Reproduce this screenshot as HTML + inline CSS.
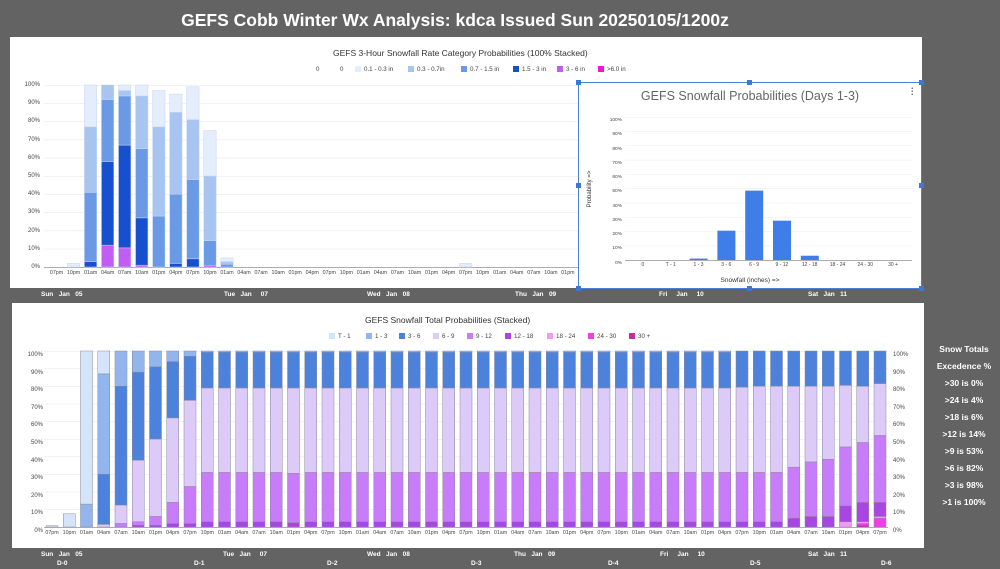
<!DOCTYPE html>
<html><head><meta charset="utf-8">
<style>
*{margin:0;padding:0;box-sizing:border-box}
body{width:1000px;height:569px;background:#636363;position:relative;overflow:hidden;font-family:"Liberation Sans",sans-serif}
.abs{position:absolute}
.title{left:0;width:910px;top:10px;text-align:center;color:#fff;font-weight:bold;font-size:17.5px}
.panel{background:#fff}
.ticks{display:flex;position:absolute;font-size:5.3px;color:#444;white-space:nowrap}
.ticks span{display:block;text-align:center;flex:none}
.day{color:#fff;font-weight:bold;font-size:6.5px;white-space:nowrap}
.yl{font-size:6px;color:#444;text-align:right;width:26px}
.side{color:#fff;font-weight:bold;font-size:8.5px;width:80px;text-align:center;left:924px}
.leg{font-size:6.2px;color:#444;white-space:nowrap}
.sq{display:inline-block;width:6px;height:6px;vertical-align:-1px;margin-right:3px}
.h{position:absolute;width:5px;height:5px;background:#3c78d8}
</style></head><body>
<div class="abs title">GEFS Cobb Winter Wx Analysis: kdca Issued Sun 20250105/1200z</div>

<div class="abs panel" style="left:10px;top:37px;width:912px;height:251px"></div>
<div class="abs panel" style="left:12px;top:303px;width:912px;height:245px"></div>

<svg class="abs" id="bars" style="left:0;top:0" width="1000" height="569"></svg>

<!-- top chart texts -->
<div class="abs" style="left:333px;top:48px;font-size:8.5px;color:#333;white-space:nowrap">GEFS 3-Hour Snowfall Rate Category Probabilities (100% Stacked)</div>
<div class="abs leg" style="left:316px;top:66px">0</div>
<div class="abs leg" style="left:340px;top:66px">0</div>
<div class="abs leg" style="left:355px;top:66px"><span class="sq" style="background:#e3edfb"></span>0.1 - 0.3 in</div>
<div class="abs leg" style="left:408px;top:66px"><span class="sq" style="background:#a8c4f0"></span>0.3 - 0.7in</div>
<div class="abs leg" style="left:461px;top:66px"><span class="sq" style="background:#6a9ae6"></span>0.7 - 1.5 in</div>
<div class="abs leg" style="left:513px;top:66px"><span class="sq" style="background:#1750cf"></span>1.5 - 3 in</div>
<div class="abs leg" style="left:557px;top:66px"><span class="sq" style="background:#c15cf5"></span>3 - 6 in</div>
<div class="abs leg" style="left:598px;top:66px"><span class="sq" style="background:#f50fe0"></span>&gt;6.0 in</div>
<div class="abs" style="left:14px;top:82px">
<div class="yl" style="position:absolute;top:0">100%</div><div class="yl" style="position:absolute;top:18.2px">90%</div><div class="yl" style="position:absolute;top:36.4px">80%</div><div class="yl" style="position:absolute;top:54.6px">70%</div><div class="yl" style="position:absolute;top:72.8px">60%</div><div class="yl" style="position:absolute;top:91px">50%</div><div class="yl" style="position:absolute;top:109.2px">40%</div><div class="yl" style="position:absolute;top:127.4px">30%</div><div class="yl" style="position:absolute;top:145.6px">20%</div><div class="yl" style="position:absolute;top:163.8px">10%</div><div class="yl" style="position:absolute;top:182px">0%</div>
</div>
<div class="ticks" style="left:48px;top:270px"><span style="width:17.05px">07pm</span><span style="width:17.05px">10pm</span><span style="width:17.05px">01am</span><span style="width:17.05px">04am</span><span style="width:17.05px">07am</span><span style="width:17.05px">10am</span><span style="width:17.05px">01pm</span><span style="width:17.05px">04pm</span><span style="width:17.05px">07pm</span><span style="width:17.05px">10pm</span><span style="width:17.05px">01am</span><span style="width:17.05px">04am</span><span style="width:17.05px">07am</span><span style="width:17.05px">10am</span><span style="width:17.05px">01pm</span><span style="width:17.05px">04pm</span><span style="width:17.05px">07pm</span><span style="width:17.05px">10pm</span><span style="width:17.05px">01am</span><span style="width:17.05px">04am</span><span style="width:17.05px">07am</span><span style="width:17.05px">10am</span><span style="width:17.05px">01pm</span><span style="width:17.05px">04pm</span><span style="width:17.05px">07pm</span><span style="width:17.05px">10pm</span><span style="width:17.05px">01am</span><span style="width:17.05px">04am</span><span style="width:17.05px">07am</span><span style="width:17.05px">10am</span><span style="width:17.05px">01pm</span><span style="width:17.05px">04pm</span></div>
<div class="abs day" style="left:41px;top:291px">Sun &nbsp; Jan &nbsp; 05</div>
<div class="abs day" style="left:224px;top:291px">Tue &nbsp; Jan &nbsp; &nbsp; 07</div>
<div class="abs day" style="left:367px;top:291px">Wed &nbsp; Jan &nbsp; 08</div>
<div class="abs day" style="left:515px;top:291px">Thu &nbsp; Jan &nbsp; 09</div>
<div class="abs day" style="left:659px;top:291px">Fri &nbsp; &nbsp; Jan &nbsp; &nbsp; 10</div>
<div class="abs day" style="left:808px;top:291px">Sat &nbsp; Jan &nbsp; 11</div>

<!-- overlay chart -->
<div class="abs panel" style="left:578px;top:82px;width:344px;height:207px;border:1px solid #4a7fd6"></div>
<svg class="abs" id="ov" style="left:0;top:0" width="1000" height="569"></svg>
<div class="abs" style="left:578px;top:89px;width:344px;text-align:center;font-size:12.5px;color:#666">GEFS Snowfall Probabilities (Days 1-3)</div>
<div class="abs" style="left:911px;top:85px;font-size:9px;color:#666;line-height:3px;font-weight:bold">.<br>.<br>.</div>
<div class="abs" style="left:596px;top:114px;font-size:4.8px;color:#444;line-height:14.27px;text-align:right;width:26px">100%<br>90%<br>80%<br>70%<br>60%<br>50%<br>40%<br>30%<br>20%<br>10%<br>0%</div>
<div class="abs" style="left:560px;top:186px;width:60px;text-align:center;font-size:6px;color:#333;transform:rotate(-90deg)">Probability =&gt;</div>
<div class="ticks" style="left:629px;top:262px;font-size:5px"><span style="width:27.8px">0</span><span style="width:27.8px">T - 1</span><span style="width:27.8px">1 - 3</span><span style="width:27.8px">3 - 6</span><span style="width:27.8px">6 - 9</span><span style="width:27.8px">9 - 12</span><span style="width:27.8px">12 - 18</span><span style="width:27.8px">18 - 24</span><span style="width:27.8px">24 - 30</span><span style="width:27.8px">30 +</span></div>
<div class="abs" style="left:700px;top:277px;width:100px;text-align:center;font-size:6.5px;color:#333">Snowfall (inches) =&gt;</div>
<div class="h" style="left:576px;top:80px"></div><div class="h" style="left:747px;top:80px"></div><div class="h" style="left:919px;top:80px"></div>
<div class="h" style="left:576px;top:183px"></div><div class="h" style="left:919px;top:183px"></div>
<div class="h" style="left:576px;top:286px"></div><div class="h" style="left:747px;top:286px"></div><div class="h" style="left:919px;top:286px"></div>

<!-- bottom chart texts -->
<div class="abs" style="left:365px;top:315px;font-size:8.5px;color:#333;white-space:nowrap">GEFS Snowfall Total Probabilities (Stacked)</div>
<div class="abs leg" style="left:329px;top:333px"><span class="sq" style="background:#d6e4f9"></span>T - 1</div>
<div class="abs leg" style="left:366px;top:333px"><span class="sq" style="background:#93b5ee"></span>1 - 3</div>
<div class="abs leg" style="left:399px;top:333px"><span class="sq" style="background:#4c82dc"></span>3 - 6</div>
<div class="abs leg" style="left:433px;top:333px"><span class="sq" style="background:#dccaf8"></span>6 - 9</div>
<div class="abs leg" style="left:467px;top:333px"><span class="sq" style="background:#c87cf9"></span>9 - 12</div>
<div class="abs leg" style="left:505px;top:333px"><span class="sq" style="background:#a845e3"></span>12 - 18</div>
<div class="abs leg" style="left:547px;top:333px"><span class="sq" style="background:#f09cf2"></span>18 - 24</div>
<div class="abs leg" style="left:588px;top:333px"><span class="sq" style="background:#f23ee9"></span>24 - 30</div>
<div class="abs leg" style="left:629px;top:333px"><span class="sq" style="background:#c22f99"></span>30 +</div>
<div class="abs" style="left:17px;top:347px;font-size:6px;color:#444;line-height:17.6px;text-align:right;width:26px">100%<br>90%<br>80%<br>70%<br>60%<br>50%<br>40%<br>30%<br>20%<br>10%<br>0%</div>
<div class="abs" style="left:893px;top:347px;font-size:6px;color:#444;line-height:17.6px;width:26px">100%<br>90%<br>80%<br>70%<br>60%<br>50%<br>40%<br>30%<br>20%<br>10%<br>0%</div>
<div class="ticks" style="left:43.4px;top:530px"><span style="width:17.25px">07pm</span><span style="width:17.25px">10pm</span><span style="width:17.25px">01am</span><span style="width:17.25px">04am</span><span style="width:17.25px">07am</span><span style="width:17.25px">10am</span><span style="width:17.25px">01pm</span><span style="width:17.25px">04pm</span><span style="width:17.25px">07pm</span><span style="width:17.25px">10pm</span><span style="width:17.25px">01am</span><span style="width:17.25px">04am</span><span style="width:17.25px">07am</span><span style="width:17.25px">10am</span><span style="width:17.25px">01pm</span><span style="width:17.25px">04pm</span><span style="width:17.25px">07pm</span><span style="width:17.25px">10pm</span><span style="width:17.25px">01am</span><span style="width:17.25px">04am</span><span style="width:17.25px">07am</span><span style="width:17.25px">10am</span><span style="width:17.25px">01pm</span><span style="width:17.25px">04pm</span><span style="width:17.25px">07pm</span><span style="width:17.25px">10pm</span><span style="width:17.25px">01am</span><span style="width:17.25px">04am</span><span style="width:17.25px">07am</span><span style="width:17.25px">10am</span><span style="width:17.25px">01pm</span><span style="width:17.25px">04pm</span><span style="width:17.25px">07pm</span><span style="width:17.25px">10pm</span><span style="width:17.25px">01am</span><span style="width:17.25px">04am</span><span style="width:17.25px">07am</span><span style="width:17.25px">10am</span><span style="width:17.25px">01pm</span><span style="width:17.25px">04pm</span><span style="width:17.25px">07pm</span><span style="width:17.25px">10pm</span><span style="width:17.25px">01am</span><span style="width:17.25px">04am</span><span style="width:17.25px">07am</span><span style="width:17.25px">10am</span><span style="width:17.25px">01pm</span><span style="width:17.25px">04pm</span><span style="width:17.25px">07pm</span></div>
<div class="abs day" style="left:41px;top:551px">Sun &nbsp; Jan &nbsp; 05</div>
<div class="abs day" style="left:223px;top:551px">Tue &nbsp; Jan &nbsp; &nbsp; 07</div>
<div class="abs day" style="left:367px;top:551px">Wed &nbsp; Jan &nbsp; 08</div>
<div class="abs day" style="left:514px;top:551px">Thu &nbsp; Jan &nbsp; 09</div>
<div class="abs day" style="left:660px;top:551px">Fri &nbsp; &nbsp; Jan &nbsp; &nbsp; 10</div>
<div class="abs day" style="left:808px;top:551px">Sat &nbsp; Jan &nbsp; 11</div>
<div class="abs day" style="left:57px;top:560px">D-0</div>
<div class="abs day" style="left:194px;top:560px">D-1</div>
<div class="abs day" style="left:327px;top:560px">D-2</div>
<div class="abs day" style="left:471px;top:560px">D-3</div>
<div class="abs day" style="left:608px;top:560px">D-4</div>
<div class="abs day" style="left:750px;top:560px">D-5</div>
<div class="abs day" style="left:881px;top:560px">D-6</div>

<div class="abs side" style="top:344px">Snow Totals</div>
<div class="abs side" style="top:361px">Excedence %</div>
<div class="abs side" style="top:378px">&gt;30 is 0%</div>
<div class="abs side" style="top:395px">&gt;24 is 4%</div>
<div class="abs side" style="top:412px">&gt;18 is 6%</div>
<div class="abs side" style="top:429px">&gt;12 is 14%</div>
<div class="abs side" style="top:446px">&gt;9 is 53%</div>
<div class="abs side" style="top:463px">&gt;6 is 82%</div>
<div class="abs side" style="top:480px">&gt;3 is 98%</div>
<div class="abs side" style="top:497px">&gt;1 is 100%</div>

<script>
var NS="http://www.w3.org/2000/svg";
function R(svg,x,y,w,h,c,st){var e=document.createElementNS(NS,"rect");e.setAttribute("x",x);e.setAttribute("y",y);e.setAttribute("width",w);e.setAttribute("height",Math.max(h,0));e.setAttribute("fill",c);if(st){e.setAttribute("stroke",st);e.setAttribute("stroke-width","0.5");}svg.appendChild(e);}
var B=document.getElementById("bars");
// top grid
for(var g=0;g<=10;g++){R(B,44,267-g*18.2,878-44,g==0?0.8:0.5,g==0?"#999":"#e4e4e4");}
var TC={P:"#c15cf5",D:"#1750cf",M:"#6a9ae6",L:"#a8c4f0",X:"#e3edfb"};
var TD={1:[["X",2]],2:[["D",3],["M",41],["L",77],["X",100]],3:[["P",12],["D",58],["M",92],["L",100]],4:[["P",10.5],["D",67],["M",94],["L",97],["X",100]],5:[["P",1],["D",27],["M",65],["L",94],["X",100]],6:[["M",28],["L",77],["X",97]],7:[["D",2],["M",40],["L",85],["X",95]],8:[["D",4.5],["M",48],["L",81],["X",99]],9:[["P",1],["M",14.5],["L",50],["X",75]],10:[["M",1.5],["L",3],["X",5]],24:[["X",2]]};
for(var i in TD){var xc=56.5+17.05*i,prev=0;TD[i].forEach(function(s){R(B,xc-6.2,267-s[1]*1.82,12.4,(s[1]-prev)*1.82,TC[s[0]],"#c8d6ee");prev=s[1];});}
// bottom grid
for(var g=0;g<=10;g++){R(B,44,527-g*17.6,888-44,g==0?0.8:0.5,g==0?"#999":"#e4e4e4");}
var BC={a:"#d6e4f9",b:"#93b5ee",c:"#4c82dc",d:"#dccaf8",e:"#c87cf9",f:"#a845e3",g:"#f09cf2",h:"#f23ee9",i:"#c22f99"};
var ST=[["f",3],["e",31],["d",79],["c",99.3],["b",100]];
var BD={0:[["a",0.7]],1:[["a",7.5]],2:[["b",13],["a",100]],3:[["d",1.5],["c",30],["b",87],["a",100]],4:[["e",2],["d",12.5],["c",80],["b",100]],5:[["f",1],["e",3],["d",38],["c",88],["b",100]],6:[["f",1],["e",6],["d",50],["c",91],["b",100]],7:[["f",2],["e",14],["d",62],["c",94],["b",100]],8:[["f",2],["e",23],["d",72],["c",97],["b",100]],
14:[["f",2.5],["e",30.5],["d",79],["c",99.3],["b",100]],
40:[["f",3],["e",31],["d",79.5],["c",100]],41:[["f",3],["e",31],["d",80],["c",100]],42:[["f",3],["e",31],["d",80],["c",100]],
43:[["f",5],["e",34],["d",80],["c",100]],44:[["f",6],["e",37],["d",80],["c",100]],45:[["f",6],["e",38.5],["d",80],["c",100]],
46:[["g",3],["f",12],["e",45.5],["d",80.5],["c",100]],47:[["i",1],["h",2],["g",3],["f",14],["e",48],["d",80],["c",100]],48:[["h",5],["g",6],["f",14],["e",52],["d",81.5],["c",100]]};
for(var i=0;i<49;i++){var d=BD[i]||ST,xc=52+17.25*i,prev=0;d.forEach(function(s){R(B,xc-6,527-s[1]*1.76,12,(s[1]-prev)*1.76,BC[s[0]],"#8a8a9a");prev=s[1];});}
// overlay
var O=document.getElementById("ov");
for(var g=0;g<=10;g++){R(O,625,260-g*14.3,912-625,g==0?0.8:0.4,g==0?"#999":"#e6e6e6");}
var OV=[0,0,1,20.5,48.5,27.5,3,0,0,0];
OV.forEach(function(v,k){if(v>0){var xc=643+27.8*k;R(O,xc-9,260-v*1.43,18,v*1.43,"#3f7ee8");}});
</script>
</body></html>
